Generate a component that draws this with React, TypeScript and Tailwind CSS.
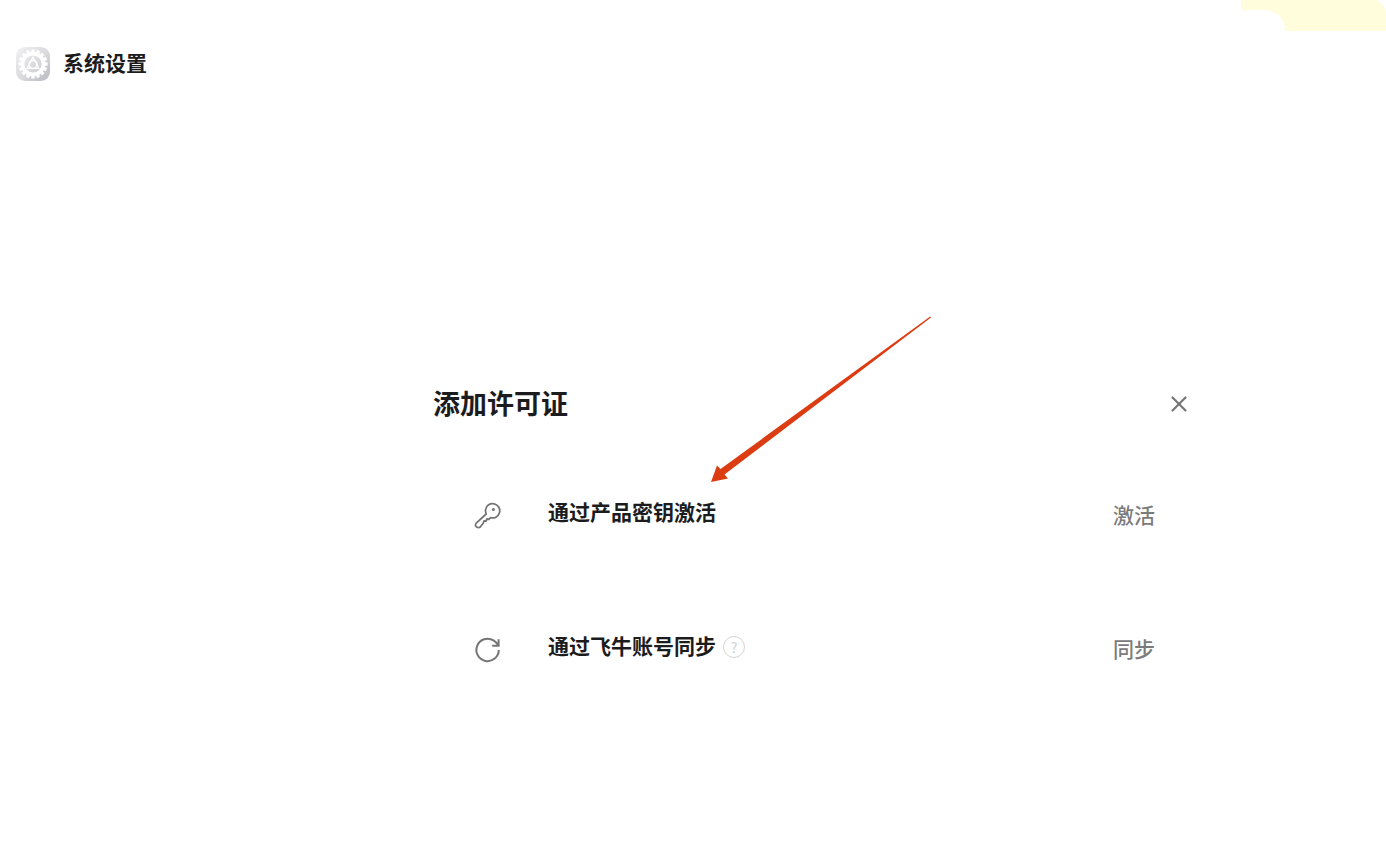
import { X } from "lucide-react";

const font = { fontFamily: '"Noto Sans CJK SC", "Noto Sans", sans-serif' };

// settings gear app icon
function GearLogo() {
    const teeth = Array.from({ length: 16 }, (_, i) => i * 22.5);
    return (
        <div className="w-[34px] h-[34px] rounded-[9px] bg-gradient-to-br from-[#f1f1f3] via-[#dcdce0] to-[#b9b9c2] flex items-center justify-center">
            <svg width="32" height="32" viewBox="0 0 32 32" fill="none">
                {teeth.map((deg) => (
                    <rect key={deg} x="14.3" y="1.4" width="3.4" height="5" rx="0.6" fill="#ffffff" transform={`rotate(${deg} 16 16)`} />
                ))}
                <circle cx="16" cy="16" r="10.4" stroke="#ffffff" strokeWidth="3.6" />
                <circle cx="16" cy="16.5" r="4" stroke="#ffffff" strokeWidth="1.6" />
                <path d="M16 9 L10 20.5 H22 Z" stroke="#ffffff" strokeWidth="1.2" strokeLinejoin="round" />
            </svg>
        </div>
    );
}

function SyncIcon() {
    return (
        <svg width="28" height="28" viewBox="0 0 28 28" fill="none" stroke="#757575" strokeWidth="2">
            <path d="M24.8 14 A11.2 11.2 0 1 1 19.5 4.4 C21.5 5.6 23 7 24.4 9.4" />
            <path d="M24.6 3.2 V9.8 H18.2" />
        </svg>
    );
}

function KeyIcon() {
    return (
        <svg width="30" height="30" viewBox="0 0 30 30" fill="none" stroke="#757575" strokeWidth="1.8" strokeLinejoin="round">
            <path d="M12.6 8.6 C13.2 4.4 17.2 1.8 21.2 2.8 C25.4 3.8 27.6 8 26.4 12 C25.2 15.8 21.2 17.8 17.6 16.6 L15.8 18.4 L13.8 18 L13 20.2 L11 20 L10.2 22.2 L7.4 25.8 C6.4 26.8 4 26.8 3.2 25.8 C2.4 24.8 2.4 23.2 3.2 22.2 L13.2 13 C12.6 11.6 12.4 10 12.6 8.6 Z" />
            <circle cx="20.4" cy="8.4" r="1.5" fill="#757575" stroke="none" />
        </svg>
    );
}

function Row({ icon, label, help, action }: { icon: React.ReactNode; label: string; help?: boolean; action: string }) {
    return (
        <div className="flex items-center h-[30px]">
            <div className="w-[30px] h-[30px] ml-[40px] flex items-center justify-center">{icon}</div>
            <div className="ml-[45px] flex items-center flex-1 -mt-[10px]">
                <span className="text-[21px] leading-[30px] font-semibold text-[#1c1c1e]">{label}</span>
                {help && (
                    <span className="ml-[7px] w-[22px] h-[22px] mt-[4px] rounded-full border border-[#d4d4d4] flex items-center justify-center text-[14px] leading-none text-[#cfcfcf]">?</span>
                )}
            </div>
            <span className="text-[21px] leading-[30px] font-medium text-[#7b7b7b] mr-[40px] mb-[4px]">{action}</span>
        </div>
    );
}

export default function App() {
    return (
        <div className="relative w-[1386px] h-[867px] bg-white overflow-hidden" style={font}>
            {/* yellow corner decoration */}
            <div className="absolute top-0 right-0 w-[145px] h-[31px] bg-[#fffddb] rounded-tr-[14px]">
                <div className="absolute left-0 top-[10px] w-[44px] h-[21px] bg-white rounded-tr-[20px]"></div>
            </div>

            <div className="flex items-center gap-[13px] pl-[16px] pt-[47px] h-[81px]">
                <GearLogo />
                <span className="text-[21px] font-semibold text-[#1c1c1e] leading-[34px] -mt-[4px]">系统设置</span>
            </div>

            <div className="w-[762px] ml-[433px] mt-[303px]">
                <div className="flex items-center justify-between h-[40px]">
                    <span className="text-[27px] font-bold text-[#1c1c1e] leading-[40px] mb-[3px]">添加许可证</span>
                    <X size={26} strokeWidth={2} className="text-[#757575] mr-[3px]" />
                </div>
                <div className="flex flex-col gap-[104px] mt-[77px]">
                    <Row icon={<KeyIcon />} label="通过产品密钥激活" action="激活" />
                    <Row icon={<SyncIcon />} label="通过飞牛账号同步" help action="同步" />
                </div>
            </div>

            {/* red annotation arrow */}
            <svg className="absolute left-0 top-0 pointer-events-none" width="1386" height="867" viewBox="0 0 1386 867" fill="none">
                <path d="M930.2 316.6 L931 317.6 L724.5 474.5 L728 478.5 L711 482 L717 465.5 L720.5 469 Z" fill="#dc3c11" />
            </svg>
        </div>
    );
}
